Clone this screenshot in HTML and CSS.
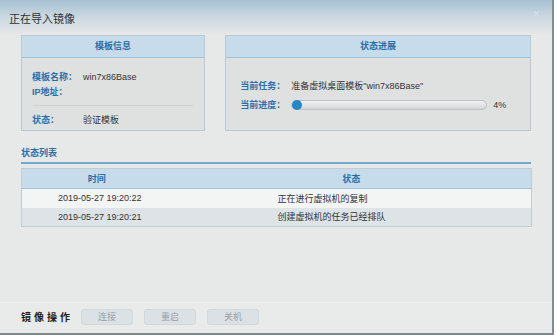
FILE: index.html
```html
<!DOCTYPE html>
<html lang="zh-CN">
<head>
    <meta charset="UTF-8">
    <title>正在导入镜像</title>
    <link rel="stylesheet" href="styles.css">
</head>
<body>
<div class="window">
    <div class="titlebar">
        <span class="title">正在导入镜像</span>
        <span class="close">×</span>
    </div>
    <div class="panels">
        <div class="panel panel-left">
            <div class="panel-head">模板信息</div>
            <div class="panel-body">
                <div class="row"><span class="label">模板名称：</span><span class="value">win7x86Base</span></div>
                <div class="row"><span class="label">IP地址：</span><span class="value"></span></div>
                <div class="sep"></div>
                <div class="row"><span class="label">状态：</span><span class="value">验证模板</span></div>
            </div>
        </div>
        <div class="panel panel-right">
            <div class="panel-head">状态进展</div>
            <div class="panel-body progress-body">
                <div class="row"><span class="label">当前任务：</span><span class="value">准备虚拟桌面模板"win7x86Base"</span></div>
                <div class="row">
                    <span class="label">当前进度：</span>
                    <div class="bar"><div class="knob"></div></div>
                    <span class="pct">4%</span>
                </div>
            </div>
        </div>
    </div>
    <div class="section-title">状态列表</div>
    <table class="list">
        <tr>
            <th class="col-time">时间</th>
            <th>状态</th>
        </tr>
        <tr class="odd">
            <td class="time">2019-05-27 19:20:22</td>
            <td>正在进行虚拟机的复制</td>
        </tr>
        <tr class="even">
            <td class="time">2019-05-27 19:20:21</td>
            <td>创建虚拟机的任务已经排队</td>
        </tr>
    </table>
    <div class="spacer"></div>
    <div class="footer">
        <span class="ops">镜像操作</span>
        <span class="btn">连接</span>
        <span class="btn">重启</span>
        <span class="btn">关机</span>
    </div>
</div>
</body>
</html>
```

FILE: styles.css
```css
*{
    margin: 0;
    padding: 0;
    box-sizing: border-box;
}
body
{
    background: #ffffff;
    font-family: "Liberation Sans", "Noto Sans CJK SC", sans-serif;
    font-size: 9px;
    color: #333;
    white-space: nowrap;
}
.window
{
    width: 554px;
    height: 335px;
    background: #e7e8e8;
    border-right: 2px solid #848c91;
    border-bottom: 2px solid #7e878c;
    border-top-left-radius: 3px;
    display: flex;
    flex-direction: column;
}
.titlebar
{
    height: 35px;
    padding: 0 12px 0 9px;
    display: flex;
    justify-content: space-between;
    align-items: flex-start;
    background: linear-gradient(#a6bfd2, #c9d7e1 45%, #e7e8e8);
}
.title
{
    font-size: 11px;
    color: #2e3236;
    margin-top: 10px;
}
.close
{
    color: #d6e0e8;
    font-size: 13px;
    margin-top: 6px;
}
.panels
{
    display: flex;
    gap: 20px;
    padding: 0 21px;
}
.panel
{
    border: 1px solid #b7cad6;
    background: #dfe1e1;
    height: 96px;
}
.panel-left
{
    width: 185px;
}
.panel-right
{
    width: 307px;
}
.panel-head
{
    height: 22px;
    background: #c7dcea;
    border-bottom: 1px solid #9fc4dc;
    color: #2a6ea6;
    font-weight: bold;
    text-align: center;
    line-height: 21px;
}
.panel-body
{
    padding: 11px 11px 0 10px;
}
.row
{
    display: flex;
    align-items: center;
    height: 15px;
}
.label
{
    color: #2a70aa;
    font-weight: bold;
    width: 51px;
    flex-shrink: 0;
}
.value
{
    color: #333;
}
.sep
{
    height: 1px;
    background: #cfd3d5;
    margin: 6px 0 6px 1px;
}
.progress-body
{
    padding: 18px 10px 0 14px;
}
.progress-body .row
{
    height: 19px;
}
.bar
{
    width: 196px;
    height: 10px;
    border: 1px solid #bcc1c4;
    border-radius: 5px;
    background: linear-gradient(#f1f2f2, #d3d6d7);
    position: relative;
}
.knob
{
    position: absolute;
    left: 0;
    top: -1px;
    width: 10px;
    height: 10px;
    border-radius: 50%;
    background: #2585c9;
}
.pct
{
    margin-left: 6px;
    color: #333;
}
.section-title
{
    margin: 15px 21px 0;
    padding-bottom: 3px;
    color: #2a70aa;
    font-weight: bold;
    border-bottom: 2px solid #74a9cf;
    height: 18px;
}
.list
{
    margin: 4px 21px 0;
    width: 511px;
    border-collapse: collapse;
    border: 1px solid #c0cdd5;
}
.list th
{
    height: 20px;
    background: #c7dcea;
    border-bottom: 1px solid #9fc4dc;
    color: #2a6ea6;
    font-weight: bold;
    font-size: 9px;
}
.col-time
{
    width: 150px;
}
.list td
{
    height: 19px;
    color: #333;
}
.list td.time
{
    padding-left: 36px;
}
.list tr.odd td
{
    background: #f3f4f4;
}
.list tr.even td
{
    background: #dde3e7;
}
.list td + td
{
    padding-left: 106px;
}
.spacer
{
    flex: 1;
}
.footer
{
    height: 31px;
    border-top: 1px solid #eef0f0;
    background: #e9eaea;
    display: flex;
    align-items: center;
    padding: 0 0 3px 21px;
    gap: 11px;
}
.ops
{
    font-weight: bold;
    font-size: 10px;
    color: #222;
    letter-spacing: 3px;
    width: 51px;
    margin-right: -2px;
}
.btn
{
    width: 52px;
    height: 16px;
    border-radius: 3px;
    background: #dce1e5;
    border: 1px solid #d3d8dc;
    color: #9aa0a5;
    text-align: center;
    line-height: 14px;
    font-size: 9px;
}
```
